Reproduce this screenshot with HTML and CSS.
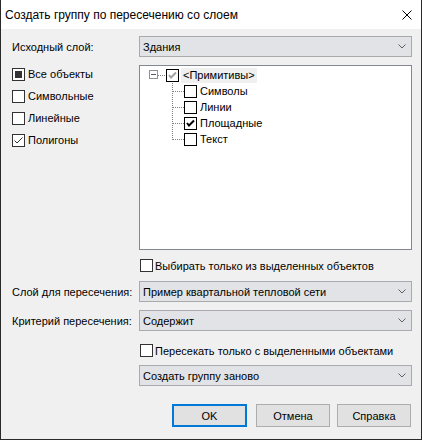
FILE: index.html
```html
<!DOCTYPE html>
<html lang="ru">
<head>
<meta charset="utf-8">
<title>Создать группу</title>
<link rel="stylesheet" href="styles.css">
</head>
<body>
<div class="window">
  <div class="titlebar">
    <span class="title">Создать группу по пересечению со слоем</span>
    <span class="close">
      <svg width="10" height="10" viewBox="0 0 10 10"><path d="M0.5 0.5 L9.5 9.5 M9.5 0.5 L0.5 9.5" stroke="#000" stroke-width="1" fill="none"/></svg>
    </span>
  </div>
  <div class="content">
    <div class="row r1">
      <span class="label">Исходный слой:</span>
      <div class="combo"><span>Здания</span><svg class="chev" width="8" height="5" viewBox="0 0 8 5"><path d="M0.5 0.5 L4 4 L7.5 0.5" stroke="#606060" fill="none"/></svg></div>
    </div>
    <div class="row r2">
      <div class="types">
        <div class="item"><span class="cb"><span class="ind"></span></span><span>Все объекты</span></div>
        <div class="item"><span class="cb"></span><span>Символьные</span></div>
        <div class="item"><span class="cb"></span><span>Линейные</span></div>
        <div class="item"><span class="cb"><svg width="11" height="11" viewBox="0 0 11 11"><path d="M1.5 5.5 L4 8 L9.5 2.5" stroke="#333" stroke-width="1" fill="none"/></svg></span><span>Полигоны</span></div>
      </div>
      <div class="tree">
        <div class="trow parent">
          <span class="expander"><span class="minus"></span></span>
          <span class="hdots"></span>
          <span class="cb dark"><svg width="11" height="11" viewBox="0 0 11 11"><path d="M2 5 L4 7.5 L9 2.5" stroke="#a0a0a0" stroke-width="2" fill="none"/></svg></span>
          <span class="ptext">&lt;Примитивы&gt;</span>
        </div>
        <div class="children">
          <div class="trow"><span class="branch"></span><span class="cb dark"></span><span class="ctext">Символы</span></div>
          <div class="trow"><span class="branch"></span><span class="cb dark"></span><span class="ctext">Линии</span></div>
          <div class="trow"><span class="branch"></span><span class="cb dark"><svg width="11" height="11" viewBox="0 0 11 11"><path d="M2 5 L4 7.5 L9 2.5" stroke="#000" stroke-width="2" fill="none"/></svg></span><span class="ctext">Площадные</span></div>
          <div class="trow"><span class="branch last"></span><span class="cb dark"></span><span class="ctext">Текст</span></div>
        </div>
      </div>
    </div>
    <div class="row r3">
      <span></span>
      <div class="check"><span class="cb"></span><span>Выбирать только из выделенных объектов</span></div>
    </div>
    <div class="row r4">
      <span class="label">Слой для пересечения:</span>
      <div class="combo"><span>Пример квартальной тепловой сети</span><svg class="chev" width="8" height="5" viewBox="0 0 8 5"><path d="M0.5 0.5 L4 4 L7.5 0.5" stroke="#606060" fill="none"/></svg></div>
    </div>
    <div class="row r5">
      <span class="label">Критерий пересечения:</span>
      <div class="combo"><span>Содержит</span><svg class="chev" width="8" height="5" viewBox="0 0 8 5"><path d="M0.5 0.5 L4 4 L7.5 0.5" stroke="#606060" fill="none"/></svg></div>
    </div>
    <div class="row r6">
      <span></span>
      <div class="check"><span class="cb"></span><span>Пересекать только с выделенными объектами</span></div>
    </div>
    <div class="row r7">
      <span></span>
      <div class="combo"><span>Создать группу заново</span><svg class="chev" width="8" height="5" viewBox="0 0 8 5"><path d="M0.5 0.5 L4 4 L7.5 0.5" stroke="#606060" fill="none"/></svg></div>
    </div>
    <div class="buttons">
      <button class="btn ok">OK</button>
      <button class="btn cancel">Отмена</button>
      <button class="btn help">Справка</button>
    </div>
  </div>
</div>
</body>
</html>
```
FILE: styles.css
```css
* { box-sizing: border-box; }
html, body { margin: 0; padding: 0; }
body {
  width: 422px;
  height: 440px;
  font-family: "Liberation Sans", Arial, sans-serif;
  font-size: 11px;
  color: #000;
  background: #f0f0f0;
}
.window {
  width: 422px;
  height: 440px;
  background: #f0f0f0;
  border-left: 1px solid #2a2a2a;
  border-right: 1px solid #2a2a2a;
  border-bottom: 1px solid #2a2a2a;
  display: flex;
  flex-direction: column;
}
.titlebar {
  height: 29px;
  background: #fff;
  display: flex;
  align-items: center;
  justify-content: space-between;
  padding-left: 4px;
  padding-right: 9px;
}
.title {
  font-size: 12px;
  font-family: "Liberation Sans", Arial, sans-serif;
  color: #000;
}
.close { display: flex; width: 10px; height: 10px; margin-top: 1px; }
.content {
  padding: 7px 9px 0 11px;
  display: flex;
  flex-direction: column;
}
.row {
  display: grid;
  grid-template-columns: 127px 1fr;
  align-items: center;
}
.label { white-space: nowrap; }
.combo {
  height: 21px;
  background: #e1e3e6;
  border: 1px solid #a8aaad;
  display: flex;
  align-items: center;
  justify-content: space-between;
  padding-left: 3px;
  padding-right: 5px;
}
.chev { display: block; }
.r2 { margin-top: 8px; align-items: start; }
.types { margin-top: -2px; }
.item {
  height: 22px;
  display: flex;
  align-items: center;
  gap: 3px;
}
.cb {
  width: 13px;
  height: 13px;
  flex: none;
  border: 1px solid #333;
  background: #fff;
  display: flex;
  align-items: center;
  justify-content: center;
}
.cb.dark { border-color: #000; }
.cb svg { display: block; }
.ind { width: 7px; height: 7px; background: #333; }
.tree {
  height: 185px;
  background: #fff;
  border: 1px solid #828790;
  padding-top: 1px;
}
.trow {
  height: 16px;
  display: flex;
  align-items: center;
}
.parent { padding-left: 9px; }
.expander {
  width: 9px;
  height: 9px;
  border: 1px solid #919191;
  display: flex;
  align-items: center;
  justify-content: center;
  margin-top: -1px;
}
.minus { width: 5px; height: 1px; background: #4e5a78; }
.hdots {
  width: 8px;
  height: 1px;
  background: linear-gradient(to right, #808080 50%, transparent 50%) 0 0 / 2px 1px repeat-x;
}
.ptext {
  margin-left: 2px;
  padding: 0 2px;
  height: 15px;
  line-height: 15px;
  background: #f0f0f0;
}
.children { padding-left: 32px; }
.branch {
  width: 12px;
  height: 16px;
  flex: none;
  background:
    linear-gradient(to right, #808080 50%, transparent 50%) 1px 8px / 2px 1px repeat-x,
    linear-gradient(to bottom, #808080 50%, transparent 50%) 0 0 / 1px 2px repeat-y;
}
.branch.last {
  background:
    linear-gradient(to right, #808080 50%, transparent 50%) 1px 8px / 2px 1px repeat-x,
    linear-gradient(to bottom, #808080 50%, transparent 50%) 0 0 / 1px 2px repeat-y;
  background-size: 2px 1px, 1px 2px;
  background-repeat: repeat-x, repeat-y;
  -webkit-mask: linear-gradient(to bottom, #000 9px, transparent 9px) 0 0 / 1px 16px no-repeat, linear-gradient(#000, #000) 1px 0 / 11px 16px no-repeat;
}
.ctext { margin-left: 3px; }
.r3 { margin-top: 9px; }
.check {
  display: flex;
  align-items: center;
  gap: 2px;
  margin-left: 1px;
  height: 13px;
}
.r4 { margin-top: 9px; }
.r5 { margin-top: 8px; }
.r6 { margin-top: 13px; }
.r7 { margin-top: 8px; }
.buttons {
  margin-top: 18px;
  display: flex;
  justify-content: flex-end;
  padding-right: 1px;
}
.btn {
  height: 23px;
  width: 74px;
  background: #e1e1e1;
  border: 1px solid #adadad;
  font-family: "Liberation Sans", Arial, sans-serif;
  font-size: 11px;
  color: #000;
  padding: 0;
}
.btn.ok { width: 75px; border: 2px solid #0078d7; }
.btn.cancel { margin-left: 9px; }
.btn.help { margin-left: 7px; }
```
